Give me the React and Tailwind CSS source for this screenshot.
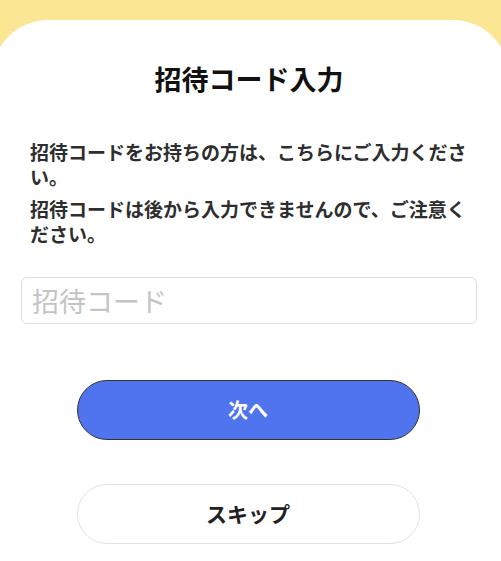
export default function App() {
  return (
    <div
      className="min-h-screen w-full overflow-hidden bg-[#fbe694] pt-5"
      style={{ fontFamily: '"Noto Sans CJK JP", "Noto Sans", sans-serif' }}
    >
      {/* white sheet, a bit wider than the window so the corners cut off */}
      <div className="-mx-2 min-h-[541px] rounded-t-[56px] bg-white pl-[29px] pr-[32px] pt-[41px]">
        <h1 className="text-center text-[27px] font-bold leading-[36px] text-[#111]">
          招待コード入力
        </h1>

        <div className="mt-[42px] pl-[9px] text-[19px] font-bold leading-[25px] text-[#2e2e2e]">
          <p>招待コードをお持ちの方は、こちらにご入力ください。</p>
          <p className="mt-[7px]">招待コードは後から入力できませんので、ご注意ください。</p>
        </div>

        <input
          type="text"
          placeholder="招待コード"
          className="mt-[31px] block h-[47px] w-[456px] rounded-md border border-[#dedede] px-[10px] text-[27px] text-[#222] outline-none placeholder:text-[#c4c4c4]"
        />

        <div className="mt-[56px] flex flex-col items-center gap-[44px] pr-[2px]">
          <button className="h-[60px] w-[343px] rounded-full border border-[#333] bg-[#4f74ee] text-[20px] font-bold text-white">
            次へ
          </button>
          <button className="h-[60px] w-[343px] rounded-full border border-[#e3e3e3] bg-white text-[21px] font-bold text-[#222]">
            スキップ
          </button>
        </div>
      </div>
    </div>
  );
}
